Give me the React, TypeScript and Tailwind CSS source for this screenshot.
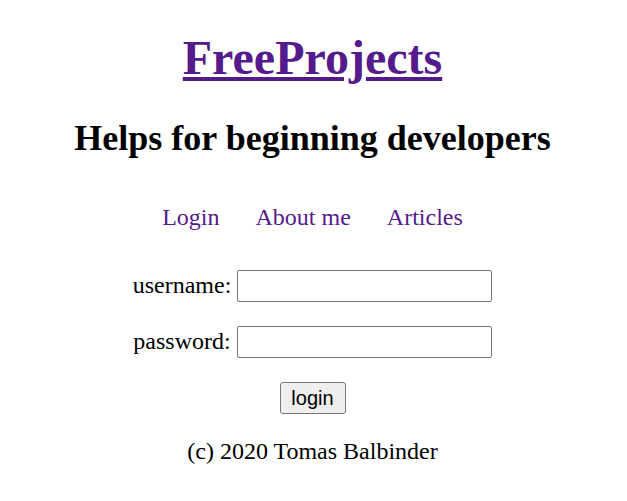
import React from "react";

export default function App() {
  return (
    <div
      className="min-h-screen bg-white text-black text-center pr-[2px]"
      style={{ fontFamily: '"Liberation Serif", "Times New Roman", serif' }}
    >
      <div className="pt-[30px]">
        <h1 className="text-[48px] leading-[56px] font-bold">
          <a href="#" className="text-[#551a8b] underline">
            FreeProjects
          </a>
        </h1>
        <h2 className="mt-[32px] text-[36px] leading-[41px] font-bold">
          Helps for beginning developers
        </h2>
        <nav className="mt-[44px] flex justify-center gap-[36px] text-[24px] leading-[28px] text-[#551a8b]">
          <a href="#">Login</a>
          <a href="#">About me</a>
          <a href="#">Articles</a>
        </nav>
        <form className="mt-[39px] flex flex-col items-center text-[24px] leading-[28px]">
          <div className="flex items-center justify-center gap-[6px] h-[32px]">
            <label className="mb-[2px]">username:</label>
            <input
              type="text"
              className="w-[255px] h-[32px] border border-[#767676] rounded-[2px] bg-white"
            />
          </div>
          <div className="mt-[24px] flex items-center justify-center gap-[6px] h-[32px]">
            <label className="mb-[2px]">password:</label>
            <input
              type="password"
              className="w-[255px] h-[32px] border border-[#767676] rounded-[2px] bg-white"
            />
          </div>
          <button
            type="button"
            className="mt-[24px] w-[66px] h-[32px] border border-[#767676] rounded-[3px] bg-[#efefef] text-[20px] leading-[22px] text-black flex items-center justify-center"
            style={{ fontFamily: '"Liberation Sans", Arial, sans-serif' }}
          >
            login
          </button>
        </form>
        <footer className="mt-[23px] text-[24px] leading-[28px]">
          (c) 2020 Tomas Balbinder
        </footer>
      </div>
    </div>
  );
}
